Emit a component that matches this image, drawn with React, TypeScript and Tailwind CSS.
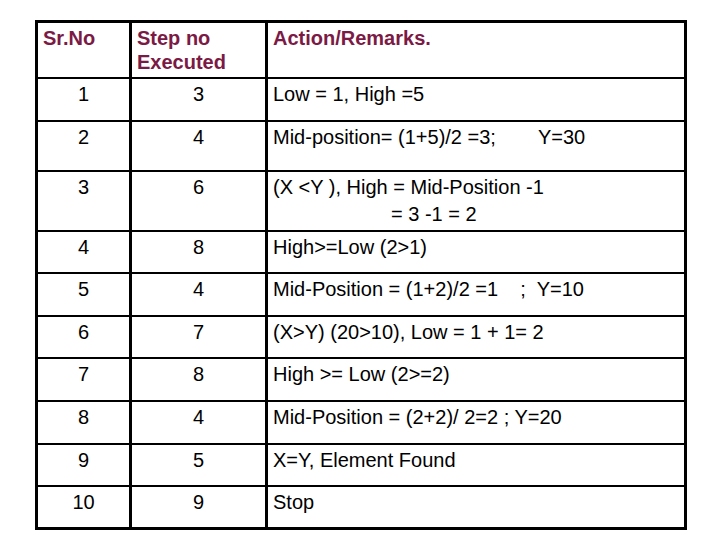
import React from 'react';

type Row = {
  no: string;
  step: string;
  height: string;
  remark: React.ReactNode;
};

const rows: Row[] = [
  { no: '1', step: '3', height: 'h-[43px]', remark: 'Low = 1, High =5' },
  {
    no: '2',
    step: '4',
    height: 'h-[50px]',
    remark: (
      <>
        Mid-position= (1+5)/2 =3;<span className="ml-[42px]">Y=30</span>
      </>
    ),
  },
  {
    no: '3',
    step: '6',
    height: 'h-[60px]',
    remark: (
      <>
        <div>(X &lt;Y ), High = Mid-Position -1</div>
        <div className="mt-[3px] pl-[118px]">= 3 -1 = 2</div>
      </>
    ),
  },
  { no: '4', step: '8', height: 'h-[42px]', remark: 'High>=Low (2>1)' },
  {
    no: '5',
    step: '4',
    height: 'h-[43px]',
    remark: <span className="whitespace-pre">{'Mid-Position = (1+2)/2 =1    ;  Y=10'}</span>,
  },
  { no: '6', step: '7', height: 'h-[42px]', remark: '(X>Y) (20>10), Low = 1 + 1= 2' },
  { no: '7', step: '8', height: 'h-[43px]', remark: 'High >= Low (2>=2)' },
  { no: '8', step: '4', height: 'h-[43px]', remark: 'Mid-Position = (2+2)/ 2=2 ; Y=20' },
  { no: '9', step: '5', height: 'h-[42px]', remark: 'X=Y, Element Found' },
  { no: '10', step: '9', height: 'h-[42px]', remark: 'Stop' },
];

export default function App() {
  return (
    <div className="w-[720px] h-[540px] bg-white pt-[20px] pl-[35px] font-['Liberation_Sans',Arial,sans-serif] text-[20px] leading-[24px] text-black">
      <div className="w-[652px] border-[3px] border-black">
        {/* header */}
        <div className="flex h-[54px] font-bold text-[#7b1a45]">
          <div className="w-[91px] pl-[5px] pt-[3px]">Sr.No</div>
          <div className="w-[136px] border-l-[3px] border-black pl-[5px] pt-[3px]">
            Step no
            <br />
            Executed
          </div>
          <div className="flex-1 border-l-[3px] border-black pl-[5px] pt-[3px]">Action/Remarks.</div>
        </div>

        {rows.map((r) => (
          <div key={r.no} className={`flex border-t-2 border-black ${r.height}`}>
            <div className="w-[91px] pt-[3px] text-center">{r.no}</div>
            <div className="w-[136px] border-l-[3px] border-black pt-[3px] text-center">{r.step}</div>
            <div className="flex-1 border-l-[3px] border-black pl-[5px] pt-[3px]">{r.remark}</div>
          </div>
        ))}
      </div>
    </div>
  );
}
